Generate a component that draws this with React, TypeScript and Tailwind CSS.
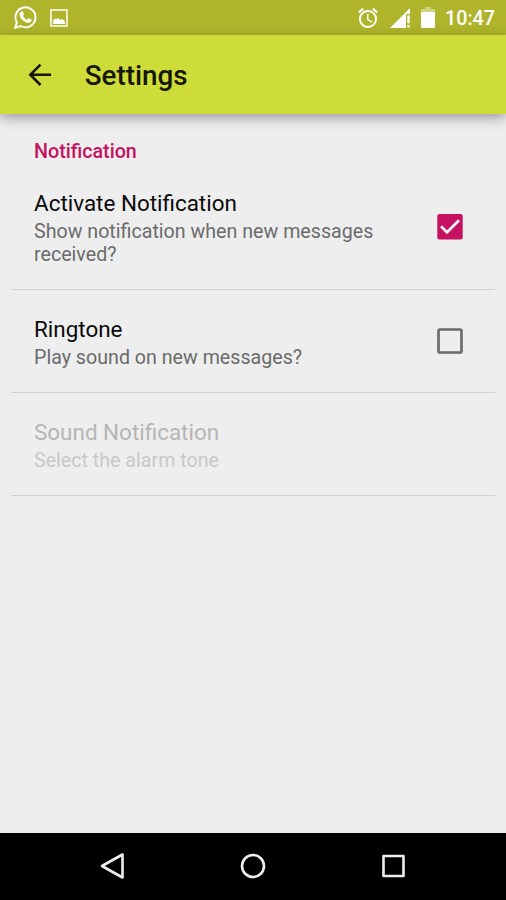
import { useState } from "react"
import { MdAccessAlarm } from "react-icons/md"

const StatusBar = () => {
  return (
    <div className="flex h-[35px] items-center justify-between bg-[#afb42b] pl-[13px] pr-[11px] text-white">
      <div className="flex items-center">
        <svg className="size-[25px]" viewBox="0 0 25 25">
          <path
            d="M3.900 17.400A10 10 0 1 1 7.600 21L2.200 22.700z"
            fill="none"
            stroke="currentColor"
            strokeWidth="2" />
          <path
            d="M8.200 6.500c.4-.4 1.300-.5 1.600.1l1.100 2.500c.2.600-.8 1.500-.9 1.900.8 1.700 2.300 3.100 4 3.700.5-.1 1.200-1.500 1.700-1.400l2.600 1.300c.5.300.2 1.400-.2 2-1 1.200-2.600 1.500-4 1.100-3.400-1-6-3.400-7.200-6.300-.7-1.800-.3-3.600 1.300-4.900z"
            fill="currentColor" />
        </svg>
        <svg className="ml-3 size-[18px]" viewBox="0 0 18 18">
          <path d="M1 1h16v16H1z" fill="none" stroke="currentColor" strokeWidth="1.5" />
          <path d="M3 15v-3.500l2-2 1.500.6L8 9l2.300 2 1.900-1L15 12.200V15z" fill="currentColor" />
        </svg>
      </div>
      <div className="flex items-center">
        <MdAccessAlarm className="size-[24px]" />
        <svg className="ml-[10px] h-5 w-[21px]" viewBox="0 0 21 20" fill="currentColor">
          <path d="M20 0v6h-4v14H0z" />
          <path d="M17.300 7.300h2.400v8h-2.400zM17.300 17h2.400v2.600h-2.400z" />
        </svg>
        <svg className="ml-[10px] h-[21px] w-[14px]" viewBox="0 0 14 21" fill="currentColor">
          <path d="M4 0h6v2h4v3H0V2h4z" opacity=".4" />
          <path d="M0 5h14v16H0z" />
        </svg>
        <span className="ml-[10px] mt-[3px] text-[19.7px] font-medium leading-none">10:47</span>
      </div>
    </div>
  )
}

const Toolbar = () => {
  return (
    <header className="relative flex h-[79px] items-center bg-[#cddc39] pl-[23px] shadow-[0_4px_12px_rgba(0,0,0,0.35)]">
      <svg className="size-[33.7px]" viewBox="0 0 24 24" fill="#151700">
        <path d="M20 11.100H7.400l5.700-5.700L11.800 4.100l-7.900 7.900 7.900 7.900 1.300-1.300-5.700-5.700H20z" />
      </svg>
      <h1 className="ml-[28px] mt-[3px] text-[27.8px] font-medium leading-none text-[#151700]">Settings</h1>
    </header>
  )
}

const CheckBox = ({ checked, onChange }: { checked: boolean; onChange: () => void }) => {
  return (
    <button className="size-[26px] shrink-0" role="checkbox" aria-checked={checked} onClick={onChange}>
      {checked ? (
        <svg className="size-full" viewBox="0 0 26 26">
          <rect x=".3" y="0" width="25.4" height="25.4" rx="2" fill="#c51162" />
          <path d="M4 12.200l6 6L22 6.200" fill="none" stroke="#eee" strokeWidth="2.9" />
        </svg>
      ) : (
        <svg className="size-full" viewBox="0 0 26 26">
          <rect x="1.5" y="1.5" width="23" height="23" rx="1.5" fill="none" stroke="#6b6b6b" strokeWidth="2.7" />
        </svg>
      )}
    </button>
  )
}

interface PreferenceProps {
  title: string
  summary: string
  disabled?: boolean
  checked?: boolean
  onChange?: () => void
}

const Preference = ({ title, summary, disabled, checked, onChange }: PreferenceProps) => {
  return (
    <li className="mx-[11px] flex items-center justify-between border-b border-[#d0d0d0] pl-[23px] pr-8">
      <div className="w-[360px] pt-[26px] pb-[23px]">
        <h2 className={`text-[22.45px] leading-[26px] ${disabled ? "text-[#b5b5b5]" : "text-[#0a0a0a]"}`}>{title}</h2>
        <p className={`mt-1 text-[19.65px] leading-[23px] ${disabled ? "text-[#c9c9c9]" : "text-[#6b6b6b]"}`}>{summary}</p>
      </div>
      {onChange && <CheckBox checked={!!checked} onChange={onChange} />}
    </li>
  )
}

const NavigationBar = () => {
  return (
    <nav className="flex h-[67px] items-center justify-center gap-[112px] bg-black pb-px">
      <svg className="size-7" viewBox="0 0 28 28" fill="none" stroke="#eee" strokeWidth="2.6" strokeLinejoin="round">
        <path d="M23.500 2.500v23L3 14z" />
      </svg>
      <svg className="size-7" viewBox="0 0 28 28" fill="none" stroke="#eee" strokeWidth="2.6">
        <circle cx="14" cy="14" r="11" />
      </svg>
      <svg className="size-7" viewBox="0 0 28 28" fill="none" stroke="#eee" strokeWidth="2.6" strokeLinejoin="round">
        <path d="M4.500 4h20v20h-20z" />
      </svg>
    </nav>
  )
}

const App = () => {
  const [notify, setNotify] = useState(true)
  const [ringtone, setRingtone] = useState(false)

  return (
    <div className="flex h-screen flex-col bg-[#eeeeee] font-['Roboto',sans-serif]">
      <StatusBar />
      <Toolbar />
      <main className="flex-1">
        <h3 className="mb-px ml-[34px] mt-[26px] text-[19.7px] font-medium leading-[23px] text-[#c51162]">Notification</h3>
        <ul>
          <Preference
            title="Activate Notification"
            summary="Show notification when new messages received?"
            checked={notify}
            onChange={() => setNotify(!notify)} />
          <Preference
            title="Ringtone"
            summary="Play sound on new messages?"
            checked={ringtone}
            onChange={() => setRingtone(!ringtone)} />
          <Preference title="Sound Notification" summary="Select the alarm tone" disabled />
        </ul>
      </main>
      <NavigationBar />
    </div>
  )
}

export default App
